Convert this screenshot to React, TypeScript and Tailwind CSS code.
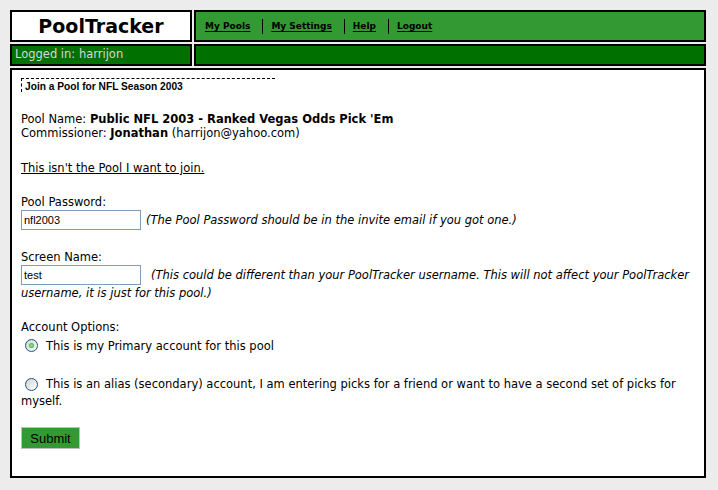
import React from "react";

function Radio({ checked }: { checked?: boolean }) {
  return (
    <span className="relative flex h-[13px] w-[13px] shrink-0 items-center justify-center rounded-full border border-[#1c5180] bg-linear-to-br from-[#d3d3ce] to-white">
      {checked && (
        <span className="h-[5px] w-[5px] rounded-full bg-[radial-gradient(circle,#9be89b,#21a121)]" />
      )}
    </span>
  );
}

export default function App() {
  const links = ["My Pools", "My Settings", "Help", "Logout"];
  return (
    <div className="h-[490px] w-[718px] bg-[#ececec] pl-[10px] pt-[10px] font-['DejaVu_Sans',sans-serif] text-black">
      <div className="grid w-[696px] grid-cols-[182px_512px] grid-rows-[32px_22px] gap-[2px]">
        <div className="flex justify-center border-2 border-black bg-white">
          <span className="text-[19px] font-bold leading-normal">PoolTracker</span>
        </div>
        <div className="flex items-center border-2 border-black bg-[#339933] pl-[9px]">
          {links.map((l, i) => (
            <React.Fragment key={l}>
              {i > 0 && <span className="ml-[12px] mr-[8px] h-[15px] w-px bg-black" />}
              <a className="text-[9px] font-bold leading-none text-black underline underline-offset-[2px]">{l}</a>
            </React.Fragment>
          ))}
        </div>
        <div className="border-2 border-black bg-[#007000] pl-[3px] pt-[1px]">
          <span className="block text-[11.5px] leading-[14px] text-[#d8d8d8]">Logged in: harrijon</span>
        </div>
        <div className="border-2 border-black bg-[#007000]" />
      </div>

      <div className="mt-[2px] h-[410px] w-[696px] border-2 border-black bg-white px-[9px] pt-[8px] text-[11.5px] leading-[14px]">
        <div className="h-[14px] w-[254px] border-l border-t border-dashed border-black pl-[3px] pt-[1px] font-['Liberation_Sans',sans-serif] text-[10.2px] font-bold leading-[13px]">
          Join a Pool for NFL Season 2003
        </div>

        <div className="mt-[20px]">
          Pool Name: <b>Public NFL 2003 - Ranked Vegas Odds Pick 'Em</b>
        </div>
        <div>
          Commissioner: <b>Jonathan</b> (harrijon@yahoo.com)
        </div>

        <div className="mt-[21px]">
          <a className="underline">This isn't the Pool I want to join.</a>
        </div>

        <div className="mt-[20px]">Pool Password:</div>
        <div className="mt-[1px] flex h-[20px] items-center">
          <input
            readOnly
            value="nfl2003"
            className="h-[20px] w-[120px] border border-[#7f9db9] bg-white px-[2px] font-['Liberation_Sans',sans-serif] text-[11px] outline-none"
          />
          <span className="ml-[5px] whitespace-nowrap italic">(The Pool Password should be in the invite email if you got one.)</span>
        </div>

        <div className="mt-[20px]">Screen Name:</div>
        <div className="mt-[1px] flex h-[20px] items-center">
          <input
            readOnly
            value="test"
            className="h-[20px] w-[120px] border border-[#7f9db9] bg-white px-[2px] font-['Liberation_Sans',sans-serif] text-[11px] outline-none"
          />
          <span className="ml-[10px] whitespace-nowrap italic">
            (This could be different than your PoolTracker username. This will not affect your PoolTracker
          </span>
        </div>
        <div className="mt-[1px] italic">username, it is just for this pool.)</div>

        <div className="mt-[20px]">Account Options:</div>
        <div className="mt-[4px] flex h-[15px] items-center pl-[4px]">
          <Radio checked />
          <span className="ml-[8px] whitespace-nowrap">This is my Primary account for this pool</span>
        </div>

        <div className="mt-[24px] flex h-[14px] items-center pl-[4px]">
          <Radio />
          <span className="ml-[8px] whitespace-nowrap">
            This is an alias (secondary) account, I am entering picks for a friend or want to have a second set of picks for
          </span>
        </div>
        <div className="mt-[3px]">myself.</div>

        <button className="mt-[19px] flex h-[22px] w-[59px] items-center justify-center border border-[#c0c0c0] bg-[#339933] font-['Liberation_Sans',sans-serif] text-[13px] leading-none text-black">
          Submit
        </button>
      </div>
    </div>
  );
}
